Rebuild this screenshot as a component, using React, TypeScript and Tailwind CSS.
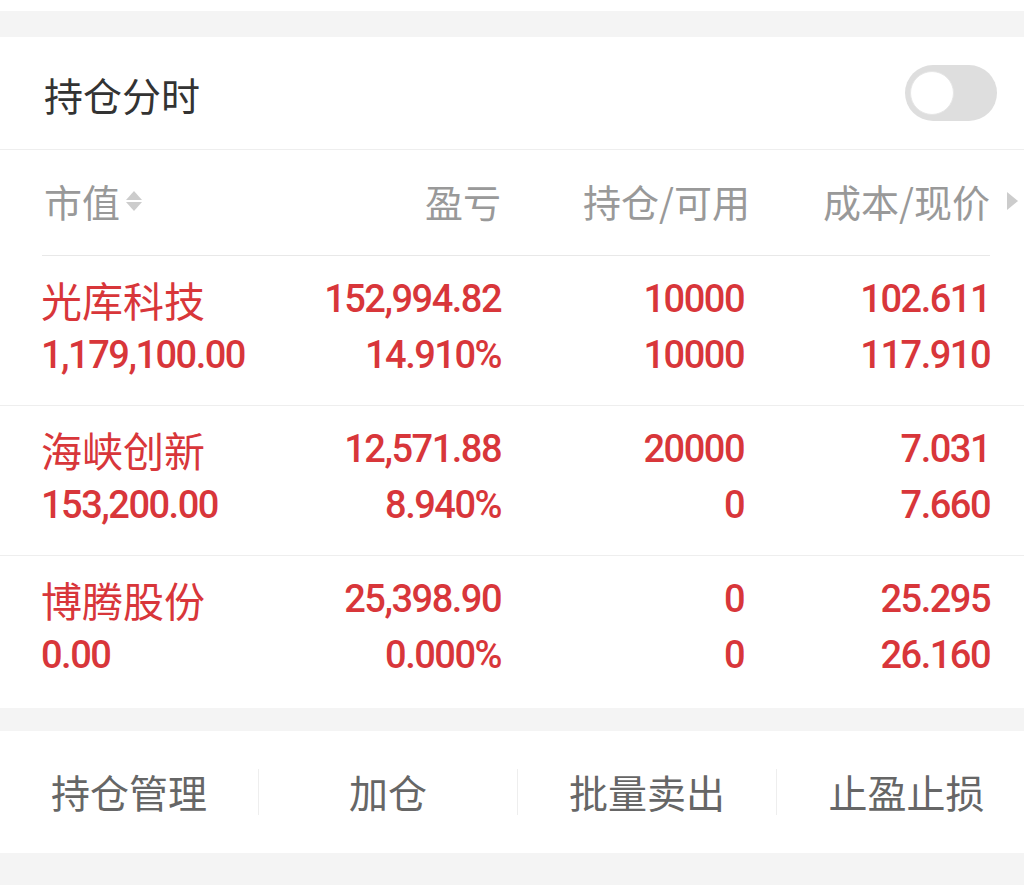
import React from "react";

const FONT = { fontFamily: '"Noto Sans CJK SC", "Noto Sans", sans-serif' };
const NUM = { fontFamily: 'Roboto, "Noto Sans CJK SC", sans-serif' };

const rows = [
  { name: "光库科技", mv: "1,179,100.00", pl: "152,994.82", plp: "14.910%", pos: "10000", avail: "10000", cost: "102.611", price: "117.910" },
  { name: "海峡创新", mv: "153,200.00", pl: "12,571.88", plp: "8.940%", pos: "20000", avail: "0", cost: "7.031", price: "7.660" },
  { name: "博腾股份", mv: "0.00", pl: "25,398.90", plp: "0.000%", pos: "0", avail: "0", cost: "25.295", price: "26.160" },
];

const numCls = "h-[56px] flex items-center text-[38px] font-medium tracking-[-1.5px] leading-none";

function Row({ r, last }: { r: (typeof rows)[number]; last: boolean }) {
  const red = "text-[#d8363a]";
  return (
    <div className={`flex pl-[41px] pt-[15px] ${last ? "pb-[25px]" : "pb-[22px] border-b border-[#eeeeee]"}`}>
      <div className={`w-[231px] flex flex-col ${red}`}>
        <div className="h-[56px] flex items-center text-[41px] leading-none" style={FONT}>{r.name}</div>
        <div className={numCls} style={NUM}>{r.mv}</div>
      </div>
      <div className={`w-[229px] flex flex-col items-end ${red}`} style={NUM}>
        <div className={numCls}>{r.pl}</div>
        <div className={numCls}>{r.plp}</div>
      </div>
      <div className={`w-[243px] flex flex-col items-end ${red}`} style={NUM}>
        <div className={numCls}>{r.pos}</div>
        <div className={numCls}>{r.avail}</div>
      </div>
      <div className={`w-[246px] flex flex-col items-end ${red}`} style={NUM}>
        <div className={numCls}>{r.cost}</div>
        <div className={numCls}>{r.price}</div>
      </div>
    </div>
  );
}

export default function App() {
  const buttons = ["持仓管理", "加仓", "批量卖出", "止盈止损"];
  return (
    <div className="w-[1024px] h-[885px] bg-white overflow-hidden" style={FONT}>
      <div className="h-[11px] bg-white" />
      <div className="h-[26px] bg-[#f4f4f4]" />
      <div className="bg-white">
        {/* title */}
        <div className="h-[113px] flex items-center justify-between pl-[44px] pr-[27px] border-b border-[#eeeeee]">
          <span className="text-[39px] text-[#333333] leading-none pt-[2px]">持仓分时</span>
          <div className="w-[92px] h-[56px] rounded-full bg-[#dedede] flex items-center pl-[5px]">
            <div className="w-[44px] h-[44px] rounded-full bg-white border border-[#e6e6e6]" />
          </div>
        </div>
        {/* header */}
        <div className="mx-[42px] mr-[34px] h-[106px] border-b border-[#e8e8e8] flex items-center text-[38px] text-[#999999] leading-none pb-[4px]">
          <div className="w-[230px] flex items-center">
            <span className="ml-[2px]">市值</span>
            <svg width="20" height="22" viewBox="0 0 20 22" className="ml-[4px]">
              <polygon points="10,1 18,10 2,10" fill="#cccccc" />
              <polygon points="2,12 18,12 10,21" fill="#cccccc" />
            </svg>
          </div>
          <div className="w-[229px] flex justify-end">盈亏</div>
          <div className="w-[249px] flex justify-end">持仓/可用</div>
          <div className="w-[240px] flex justify-end relative">
            成本/现价
            <svg width="11" height="18" viewBox="0 0 11 18" className="absolute right-[-28px] top-[10px]">
              <polygon points="0,0 11,9 0,18" fill="#cccccc" />
            </svg>
          </div>
        </div>
        {rows.map((r, i) => (
          <Row key={r.name} r={r} last={i === rows.length - 1} />
        ))}
      </div>
      <div className="h-[23px] bg-[#f4f4f4]" />
      <div className="h-[122px] bg-white flex items-center">
        {buttons.map((b, i) => (
          <div
            key={b}
            className={`w-[259px] shrink-0 h-[46px] flex items-center justify-center text-[39px] text-[#666666] leading-none pb-[2px] ${i < 3 ? "border-r border-[#eeeeee]" : ""}`}
          >
            {b}
          </div>
        ))}
      </div>
      <div className="h-[32px] bg-[#f4f4f4]" />
    </div>
  );
}
